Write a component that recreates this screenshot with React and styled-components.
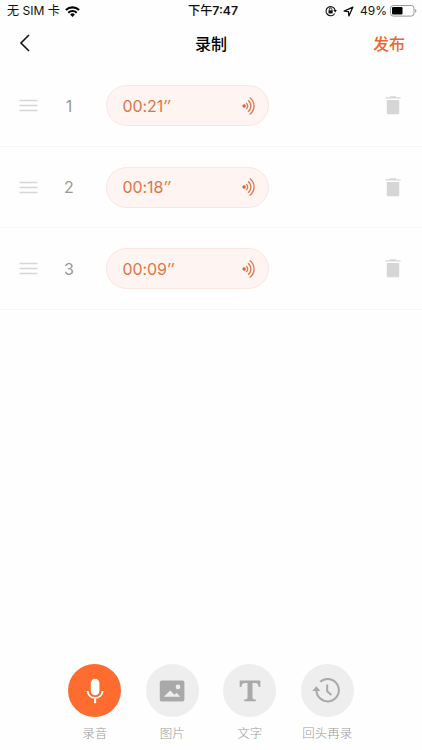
import React, { useState } from "react";

// libraries
import styled, { createGlobalStyle } from "styled-components";

const tools = [
  { id: "record", label: "录音", Icon: MicIcon },
  { id: "image", label: "图片", Icon: PictureIcon },
  { id: "text", label: "文字", Icon: TextIcon },
  { id: "redo", label: "回头再录", Icon: HistoryIcon },
];

const App = () => {
  const [records, setRecords] = useState([
    { id: 1, time: "00:21" },
    { id: 2, time: "00:18" },
    { id: 3, time: "00:09" },
  ]);
  const [currentTool, setCurrentTool] = useState("record");

  const removeRecord = (id) => {
    setRecords(records.filter((record) => record.id !== id));
  };

  return (
    <Wrapper>
      <GlobalStyle />
      <StatusBar>
        <StatusSide>
          <Carrier>无 SIM 卡</Carrier>
          <WifiIcon />
        </StatusSide>
        <Clock>
          下午<b>7:47</b>
        </Clock>
        <StatusSide $end>
          <LockIcon />
          <LocationIcon />
          <Percent>49%</Percent>
          <BatteryIcon />
        </StatusSide>
      </StatusBar>

      <Header>
        <BackButton aria-label="返回">
          <svg width="12" height="20" viewBox="0 0 12 20">
            <path d="M10 2 2 10l8 8" fill="none" stroke="#111" strokeWidth="1.6" />
          </svg>
        </BackButton>
        <Title>录制</Title>
        <PublishButton>发布</PublishButton>
      </Header>

      <RecordList>
        {records.map((record, index) => (
          <RecordRow key={record.id}>
            <DragIcon />
            <RowNumber>{index + 1}</RowNumber>
            <VoiceBubble>
              <span>
                {record.time}
                <i>″</i>
              </span>
              <SoundIcon />
            </VoiceBubble>
            <DeleteButton aria-label="删除" onClick={() => removeRecord(record.id)}>
              <TrashIcon />
            </DeleteButton>
          </RecordRow>
        ))}
      </RecordList>

      <Toolbar>
        {tools.map(({ id, label, Icon }) => (
          <ToolButton key={id} onClick={() => setCurrentTool(id)}>
            <ToolCircle $active={currentTool === id}>
              <Icon />
            </ToolCircle>
            <ToolLabel>{label}</ToolLabel>
          </ToolButton>
        ))}
      </Toolbar>
    </Wrapper>
  );
};

export default App;

// icons
function WifiIcon() {
  return (
    <svg width="15" height="11" viewBox="0 0 15 11">
      <g fill="none" stroke="#000" strokeWidth="2.1">
        <path d="M.9 4.1a9.4 9.4 0 0 1 13.2 0" />
        <path d="M3.3 6.7a6 6 0 0 1 8.4 0" />
      </g>
      <path d="M7.5 10.9 5.1 8.5a3.4 3.4 0 0 1 4.8 0z" />
    </svg>
  );
}

function LockIcon() {
  return (
    <svg width="12" height="12" viewBox="0 0 12 12">
      <path
        d="M9.7 8.4A4.6 4.6 0 1 1 10.1 5"
        fill="none"
        stroke="#111"
        strokeWidth="1.1"
      />
      <path d="M8.3 5.1h3.6L10.2 7.4z" fill="#111" />
      <rect x="3.5" y="5.2" width="4.2" height="3.3" rx=".4" fill="#111" />
      <path d="M4.3 5.4V4.3a1.3 1.3 0 0 1 2.6 0v1.1" fill="none" stroke="#111" strokeWidth=".9" />
    </svg>
  );
}

function LocationIcon() {
  return (
    <svg width="11" height="11" viewBox="0 0 11 11">
      <path
        d="M9.9 1.1 1.1 5.1l4.3.6.5 4.2z"
        fill="none"
        stroke="#111"
        strokeWidth="1.3"
        strokeLinejoin="round"
      />
    </svg>
  );
}

function BatteryIcon() {
  return (
    <svg width="27" height="12" viewBox="0 0 27 12">
      <rect x=".5" y=".5" width="23.5" height="10.6" rx="2.8" fill="none" stroke="#999" />
      <rect x="2" y="2" width="10.5" height="7.6" rx="1" />
      <path d="M25.2 4v3.8c1.6-.7 1.6-3.1 0-3.8z" fill="#999" />
    </svg>
  );
}

function DragIcon() {
  return (
    <svg width="19" height="13" viewBox="0 0 19 13">
      <path d="M.5 1.5h18M.5 6.5h18M.5 11.5h18" stroke="#d6d6d6" strokeWidth="1.5" />
    </svg>
  );
}

function SoundIcon() {
  return (
    <svg width="14" height="20" viewBox="0 0 14 20">
      <circle cx="2.1" cy="10" r="1.7" fill="#e2602f" />
      <g fill="none" stroke="#e07a50" strokeWidth="1.35">
        <path d="M4.3 6.9a4.2 4.2 0 0 1 0 6.2" />
        <path d="M6 4.2a7.3 7.3 0 0 1 0 11.6" />
        <path d="M7.7 1.5a10.5 10.5 0 0 1 0 17" />
      </g>
    </svg>
  );
}

function TrashIcon() {
  return (
    <svg width="16" height="19" viewBox="0 0 16 19" fill="#d6d6d6">
      <path d="M5 .2h6v1.1h4.6v1.3H.4V1.3H5z" />
      <path d="M1.8 4.1h12.4v13q0 1.2-1.2 1.2H3q-1.2 0-1.2-1.2z" />
    </svg>
  );
}

function MicIcon() {
  return (
    <svg width="18" height="26" viewBox="0 0 18 26">
      <rect x="4.8" y=".8" width="8.6" height="16.4" rx="4.3" fill="#fff" />
      <path
        d="M1.5 13c.5 4.4 3.8 6.9 7.6 6.9s7.1-2.5 7.6-6.9M9.1 19.9v5.3"
        fill="none"
        stroke="#fff"
        strokeWidth="2"
      />
    </svg>
  );
}

function PictureIcon() {
  return (
    <svg width="26" height="22" viewBox="0 0 26 22">
      <rect x=".8" y=".5" width="24.6" height="21" rx="2" fill="#a9a9a9" />
      <circle cx="19" cy="6.9" r="2.3" fill="#eee" />
      <path d="m4.8 16.8 6.4-6.3 4.1 4.2 2.3-1.6 3.7 3.7z" fill="#eee" />
    </svg>
  );
}

function TextIcon() {
  return (
    <svg width="22" height="22" viewBox="0 0 22 22">
      <path
        d="M.7.6h20.6v6.3h-1.7c-.4-2.8-1.2-3.8-3.7-3.8h-2.4v14.7c0 1.2.9 1.7 3.3 1.8v1.7H5.2v-1.7c2.4-.1 3.3-.6 3.3-1.8V3.1H6.1c-2.5 0-3.3 1-3.7 3.8H.7z"
        fill="#a9a9a9"
      />
    </svg>
  );
}

function HistoryIcon() {
  return (
    <svg width="30" height="26" viewBox="0 0 30 26">
      <g fill="none" stroke="#a9a9a9" strokeWidth="2">
        <path d="M8.2 3.8A11.2 11.2 0 1 1 4.5 11" />
        <path d="M15.2 6.6v6.7l4.2 3.8" />
      </g>
      <path d="M4.3 8.2 8.4 13H.2z" fill="#a9a9a9" />
    </svg>
  );
}

const GlobalStyle = createGlobalStyle`
  * {
    box-sizing: border-box;
  }
  body {
    margin: 0;
    background-color: #fefefe;
    font-family: Inter, "Noto Sans CJK SC", sans-serif;
  }
  button {
    padding: 0;
    border: none;
    background: none;
    font-family: inherit;
    cursor: pointer;
  }
  svg {
    display: block;
    flex-shrink: 0;
  }
`;

const Wrapper = styled.div`
  display: flex;
  flex-direction: column;
  width: 100%;
  height: 100vh;
  overflow: hidden;
`;

const StatusBar = styled.div`
  display: grid;
  grid-template-columns: 1fr auto 1fr;
  align-items: center;
  height: 22px;
  padding: 0 5px 0 7px;
  line-height: 22px;
  color: #111;
`;

const StatusSide = styled.div`
  display: flex;
  align-items: center;
  justify-content: ${({ $end }) => ($end ? "flex-end" : "flex-start")};
  gap: ${({ $end }) => ($end ? "6px" : "5px")};
`;

const Carrier = styled.span`
  font-size: 12.1px;
`;

const Clock = styled.span`
  padding-left: 2px;
  font-size: 12.2px;
  font-weight: 500;

  b {
    font-weight: 600;
  }
`;

const Percent = styled.span`
  margin-right: -3px;
  font-size: 12px;
`;

const Header = styled.header`
  display: grid;
  grid-template-columns: 1fr auto 1fr;
  align-items: center;
  height: 42px;
  padding: 0 17px;
`;

const BackButton = styled.button`
  justify-self: start;
  padding-left: 2px;
`;

const Title = styled.div`
  font-size: 16px;
  font-weight: 500;
  color: #000;
`;

const PublishButton = styled.button`
  justify-self: end;
  font-size: 16px;
  font-weight: 500;
  color: #ec6537;
`;

const RecordList = styled.div`
  flex: 1;
  padding-top: 1px;
`;

const RecordRow = styled.div`
  display: grid;
  grid-template-columns: 19px 68px 163px 1fr;
  align-items: center;
  height: 81.5px;
  padding: 1px 21px 0 19px;
  border-bottom: 1px solid #f6f6f6;
`;

const RowNumber = styled.div`
  padding-right: 6px;
  text-align: center;
  font-size: 16px;
  color: #999;
`;

const VoiceBubble = styled.div`
  display: flex;
  align-items: center;
  justify-content: space-between;
  height: 41px;
  padding: 0 12px 0 15.5px;
  border: 1px solid #fbe5df;
  border-radius: 21px;
  background-color: #fef4f1;
  font-size: 16px;
  letter-spacing: -0.1px;
  color: #df7546;
`;

const DeleteButton = styled.button`
  justify-self: end;
`;

const Toolbar = styled.div`
  display: flex;
  justify-content: center;
  height: 86px;
`;

const ToolButton = styled.button`
  display: flex;
  flex-direction: column;
  align-items: center;
  width: 77.5px;
`;

const ToolCircle = styled.div`
  display: flex;
  align-items: center;
  justify-content: center;
  width: 53px;
  height: 53px;
  border-radius: 50%;
  background-color: ${({ $active }) => ($active ? "#fe6d2f" : "#eeeeee")};
`;

const ToolLabel = styled.div`
  margin-top: 7.5px;
  line-height: 18px;
  font-size: 12.5px;
  font-weight: 300;
  color: #999;
`;
